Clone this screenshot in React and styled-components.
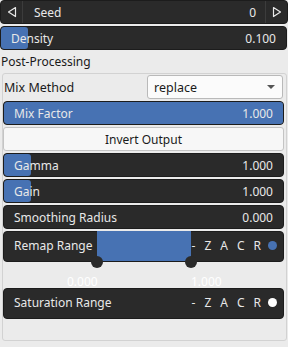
import React from "react";
import styled, { createGlobalStyle } from "styled-components";

const GlobalStyle = createGlobalStyle`
  html, body { margin: 0; padding: 0; }
  body {
    background: #ebebeb;
    font-family: "Noto Sans", "Open Sans", sans-serif;
    font-size: 12px;
    color: #1a1a1a;
  }
`;

const Root = styled.div`
  width: 288px;
  height: 347px;
  display: flex;
  flex-direction: column;
  gap: 2px;
  box-sizing: border-box;
  overflow: hidden;
`;

const DarkRow = styled.div`
  position: relative;
  flex-shrink: 0;
  box-sizing: border-box;
  height: ${(p) => p.$h || 24}px;
  margin-right: ${(p) => p.$mr ?? 1}px;
  background: #2a2a2a;
  border: 1px solid #1c1c1c;
  border-radius: 4px;
  display: flex;
  align-items: ${(p) => (p.$top ? "flex-start" : "center")};
  color: #e8e8e8;
  overflow: ${(p) => (p.$visible ? "visible" : "hidden")};
`;

const ArrowBtn = styled.div`
  width: 21px;
  align-self: stretch;
  display: flex;
  align-items: center;
  justify-content: center;
  border-${(p) => (p.$side === "left" ? "right" : "left")}: 1px solid #3c3c3c;
`;

const Label = styled.span`
  position: relative;
  z-index: 1;
  flex: 1;
  padding-left: ${(p) => p.$pl ?? 10}px;
  padding-top: ${(p) => p.$pt ?? 0}px;
  white-space: nowrap;
`;

const Value = styled.span`
  position: relative;
  z-index: 1;
  padding-right: ${(p) => p.$pr ?? 10}px;
`;

const Fill = styled.div`
  position: absolute;
  left: 0;
  top: 0;
  bottom: 0;
  background: #4772b3;
  border-radius: 3px;
`;

const SectionTitle = styled.div`
  flex-shrink: 0;
  height: 19px;
  line-height: 19px;
  padding-left: 1px;
  font-size: 12px;
`;

const Panel = styled.div`
  flex-shrink: 0;
  margin: 0 1px 0 2px;
  height: 268px;
  box-sizing: border-box;
  border: 1px solid #d2d2d2;
  border-radius: 3px;
  padding: 1px 1px 0 0;
  display: flex;
  flex-direction: column;
  gap: 2px;
`;

const FieldRow = styled.div`
  flex-shrink: 0;
  height: 24px;
  display: flex;
  align-items: center;
  justify-content: space-between;
  padding-left: 1px;
  margin-right: 2px;
`;

const FieldLabel = styled.span`
  font-size: 12.5px;
`;

const Select = styled.div`
  width: 136px;
  height: 24px;
  box-sizing: border-box;
  background: #fbfbfb;
  border: 1px solid #b9b9b9;
  border-radius: 3px;
  display: flex;
  align-items: center;
  justify-content: space-between;
  padding: 0 7px 0 6px;
  font-size: 12.5px;
`;

const Caret = styled.span`
  width: 0;
  height: 0;
  border-left: 4px solid transparent;
  border-right: 4px solid transparent;
  border-top: 4px solid #555;
`;

const Button = styled.div`
  flex-shrink: 0;
  height: 24px;
  box-sizing: border-box;
  margin-right: 1px;
  background: #f7f7f7;
  border: 1px solid #c4c4c4;
  border-radius: 3px;
  display: flex;
  align-items: center;
  justify-content: center;
`;

const RangeFill = styled.div`
  position: absolute;
  top: -1px;
  bottom: 0;
  background: #4772b3;
`;

const Knob = styled.div`
  position: absolute;
  bottom: -7px;
  width: 12px;
  height: 12px;
  margin-left: -6px;
  border-radius: 50%;
  background: #2a2a2a;
  z-index: 2;
`;

const Flags = styled.div`
  position: relative;
  z-index: 1;
  display: flex;
  align-items: center;
  gap: 9px;
  padding-right: 6px;
  padding-top: 5px;
  font-size: 12px;
`;

const Dot = styled.span`
  width: 9px;
  height: 9px;
  border-radius: 50%;
  background: ${(p) => p.$color};
  margin-left: -2px;
`;

const RangeLabels = styled.div`
  position: relative;
  flex-shrink: 0;
  height: 22px;
  color: #ffffff;
  font-size: 12px;
`;

const RangeLabel = styled.span`
  position: absolute;
  top: 9px;
`;

const LeftArrow = () => (
  <svg width="10" height="12" viewBox="0 0 10 12">
    <path d="M8.5 1.5 L1.5 6 L8.5 10.5 Z" fill="none" stroke="#e8e8e8" strokeWidth="1.2" strokeLinejoin="round" />
  </svg>
);
const RightArrow = () => (
  <svg width="10" height="12" viewBox="0 0 10 12">
    <path d="M1.5 1.5 L8.5 6 L1.5 10.5 Z" fill="none" stroke="#e8e8e8" strokeWidth="1.2" strokeLinejoin="round" />
  </svg>
);

const Slider = ({ label, value, fill }) => (
  <DarkRow>
    {fill > 0 && <Fill style={{ width: fill }} />}
    <Label>{label}</Label>
    <Value>{value}</Value>
  </DarkRow>
);

const RangeRow = ({ label, dot, from, to }) => (
  <DarkRow $h={31} $top $visible>
    {to > from && (
      <>
        <RangeFill style={{ left: from, width: to - from }} />
        <Knob style={{ left: from }} />
        <Knob style={{ left: to }} />
      </>
    )}
    <Label $pt={5}>{label}</Label>
    <Flags>
      <span>-</span>
      <span>Z</span>
      <span>A</span>
      <span>C</span>
      <span>R</span>
      <Dot $color={dot} />
    </Flags>
  </DarkRow>
);

export default function App() {
  return (
    <>
      <GlobalStyle />
      <Root>
        <DarkRow $mr={0}>
          <ArrowBtn $side="left">
            <LeftArrow />
          </ArrowBtn>
          <Label $pl={11}>Seed</Label>
          <Value $pr={9}>0</Value>
          <ArrowBtn $side="right">
            <RightArrow />
          </ArrowBtn>
        </DarkRow>
        <Slider label="Density" value="0.100" fill={27} />
        <SectionTitle>Post-Processing</SectionTitle>
        <Panel>
          <FieldRow>
            <FieldLabel>Mix Method</FieldLabel>
            <Select>
              <span>replace</span>
              <Caret />
            </Select>
          </FieldRow>
          <Slider label="Mix Factor" value="1.000" fill={300} />
          <Button>Invert Output</Button>
          <Slider label="Gamma" value="1.000" fill={27} />
          <Slider label="Gain" value="1.000" fill={27} />
          <Slider label="Smoothing Radius" value="0.000" fill={0} />
          <RangeRow label="Remap Range" dot="#4772b3" from={93} to={187} />
          <RangeLabels>
            <RangeLabel style={{ left: 64 }}>0.000</RangeLabel>
            <RangeLabel style={{ left: 188 }}>1.000</RangeLabel>
          </RangeLabels>
          <RangeRow label="Saturation Range" dot="#ffffff" from={0} to={0} />
        </Panel>
      </Root>
    </>
  );
}
